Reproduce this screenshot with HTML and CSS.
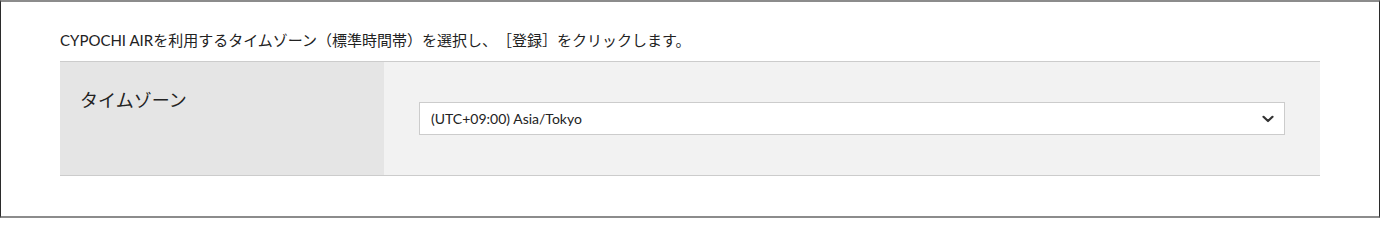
FILE: index.html
```html
<!DOCTYPE html>
<html lang="ja">
<head>
<meta charset="utf-8">
<title>タイムゾーン</title>
<link rel="stylesheet" href="styles.css">
</head>
<body>
<div class="frame">
  <p class="intro">CYPOCHI AIRを利用するタイムゾーン（標準時間帯）を選択し、［登録］をクリックします。</p>
  <div class="form-table">
    <div class="label-cell">タイムゾーン</div>
    <div class="value-cell">
      <div class="select-box">
        <span class="select-text">(UTC+09:00) Asia/Tokyo</span>
        <svg class="chevron" width="12" height="8" viewBox="0 0 12 8" aria-hidden="true">
          <path d="M1.5 1.8 L6 6 L10.5 1.8" fill="none" stroke="#333" stroke-width="2.2" stroke-linecap="round" stroke-linejoin="round"/>
        </svg>
      </div>
    </div>
  </div>
</div>
</body>
</html>
```
FILE: styles.css
```css
* { box-sizing: border-box; }
html, body { margin: 0; padding: 0; background: #fff; }
body {
  font-family: Lato, "Noto Sans CJK JP", sans-serif;
  color: #333;
  width: 1381px;
  height: 218px;
  text-spacing-trim: space-all;
}
.frame {
  width: 1380px;
  height: 218px;
  border-top: 2px solid #8c8c8c;
  border-bottom: 2px solid #8c8c8c;
  border-left: 1px solid #2b2b2b;
  border-right: 1px solid #2b2b2b;
  padding: 0 0 0 59px;
}
.intro {
  margin: 0;
  padding-top: 28px;
  height: 59px;
  font-size: 15px;
  line-height: 20px;
  color: #222;
}
.form-table {
  width: 1260px;
  display: grid;
  grid-template-columns: 324px 1fr;
  border-top: 1px solid #ccc;
  border-bottom: 1px solid #ccc;
}
.label-cell {
  background: #e5e5e5;
  padding: 26px 20px 0;
  font-size: 18px;
  line-height: 24px;
  color: #222;
}
.value-cell {
  background: #f2f2f2;
  padding: 40px 35px;
}
.select-box {
  height: 33px;
  background: #fff;
  border: 1px solid #ccc;
  display: flex;
  align-items: center;
  justify-content: space-between;
  padding: 0 10px 0 11px;
}
.select-text {
  font-size: 14px;
  color: #222;
}
.chevron { display: block; margin-top: 0; }
```
